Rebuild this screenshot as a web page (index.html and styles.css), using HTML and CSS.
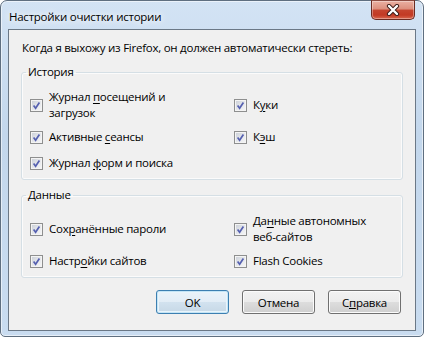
FILE: index.html
```html
<!DOCTYPE html>
<html lang="ru">
<head>
<meta charset="utf-8">
<title>Настройки очистки истории</title>
<link rel="stylesheet" href="styles.css">
</head>
<body>
<div class="window">
  <div class="titlebar">
    <span class="title">Настройки очистки истории</span>
    <span class="close"><svg width="14" height="12" viewBox="0 0 14 12"><path d="M3 2 L11 10 M11 2 L3 10" stroke="#3a1a16" stroke-width="4.2" stroke-linecap="round"/><path d="M3 2 L11 10 M11 2 L3 10" stroke="#fff" stroke-width="2.4" stroke-linecap="round"/></svg></span>
  </div>
  <div class="client">
    <p class="intro">Когда я выхожу из Firefox, он должен автоматически стереть:</p>
    <fieldset class="group history">
      <legend>История</legend>
      <div class="grid">
        <label class="check"><span class="cb"><svg viewBox="0 0 9 9"><path d="M1.6 4.6 L3.6 7.2 L7.4 1.6"/></svg></span><span>Журнал <u>п</u>осещений и<br>загрузок</span></label>
        <label class="check"><span class="cb"><svg viewBox="0 0 9 9"><path d="M1.6 4.6 L3.6 7.2 L7.4 1.6"/></svg></span><span>К<u>у</u>ки</span></label>
        <label class="check"><span class="cb"><svg viewBox="0 0 9 9"><path d="M1.6 4.6 L3.6 7.2 L7.4 1.6"/></svg></span><span>Активные <u>с</u>еансы</span></label>
        <label class="check"><span class="cb"><svg viewBox="0 0 9 9"><path d="M1.6 4.6 L3.6 7.2 L7.4 1.6"/></svg></span><span>К<u>э</u>ш</span></label>
        <label class="check"><span class="cb"><svg viewBox="0 0 9 9"><path d="M1.6 4.6 L3.6 7.2 L7.4 1.6"/></svg></span><span>Журнал <u>ф</u>орм и поиска</span></label>
      </div>
    </fieldset>
    <fieldset class="group data">
      <legend>Данные</legend>
      <div class="grid grid-data">
        <label class="check"><span class="cb"><svg viewBox="0 0 9 9"><path d="M1.6 4.6 L3.6 7.2 L7.4 1.6"/></svg></span><span>Сох<u>р</u>анённые пароли</span></label>
        <label class="check"><span class="cb"><svg viewBox="0 0 9 9"><path d="M1.6 4.6 L3.6 7.2 L7.4 1.6"/></svg></span><span>Да<u>н</u>ные автономных<br>веб-сайтов</span></label>
        <label class="check"><span class="cb"><svg viewBox="0 0 9 9"><path d="M1.6 4.6 L3.6 7.2 L7.4 1.6"/></svg></span><span>Настр<u>о</u>йки сайтов</span></label>
        <label class="check"><span class="cb"><svg viewBox="0 0 9 9"><path d="M1.6 4.6 L3.6 7.2 L7.4 1.6"/></svg></span><span>Flash Cookies</span></label>
      </div>
    </fieldset>
    <div class="buttons">
      <button class="btn default">OK</button>
      <button class="btn">Отмена</button>
      <button class="btn">С<u>п</u>равка</button>
    </div>
  </div>
</div>
</body>
</html>
```
FILE: styles.css
```css
* { box-sizing: border-box; }
html, body { margin: 0; padding: 0; background: #ffffff; }
body {
  font-family: "Open Sans", "Noto Sans", "DejaVu Sans", sans-serif;
  font-size: 11.5px;
  line-height: 16px;
  letter-spacing: -0.25px;
  color: #000;
}
.window {
  width: 424px;
  height: 337px;
  border: 1px solid #5f6f80;
  border-radius: 7px 7px 5px 5px;
  background: linear-gradient(to bottom, #d3e3f4 0%, #c3d7ec 40%, #c9dcf0 100%);
  box-shadow: inset 0 0 0 1px rgba(255,255,255,0.55);
  padding: 0 7px 5px 7px;
  display: flex;
  flex-direction: column;
}
.titlebar {
  height: 28px;
  display: flex;
  justify-content: space-between;
  align-items: flex-start;
  flex: none;
}
.title {
  padding: 8px 0 0 1px;
  text-shadow: 0 0 6px #fff, 0 0 10px #fff;
}
.close {
  margin-top: -1px;
  margin-right: 1px;
  width: 44px;
  height: 20px;
  border: 1px solid #6a2b22;
  border-top-color: #8a4a40;
  border-radius: 0 0 5px 5px;
  background: linear-gradient(to bottom, #eab0a2 0%, #dc8e7c 45%, #c5452f 50%, #c23a24 78%, #d9684f 100%);
  box-shadow: inset 0 0 0 1px rgba(255,255,255,0.35);
  display: flex;
  align-items: center;
  justify-content: center;
}
.client {
  flex: 1;
  border: 1px solid #6b7886;
  background: #f0f0f0;
  padding: 10px 12px 0 12px;
  display: flex;
  flex-direction: column;
}
.intro {
  margin: 0 0 8px 1px;
}
.group {
  margin: 0;
  border: 1px solid #d5dfe5;
  border-radius: 3px;
  box-shadow: inset 0 0 0 1px #fbfbfb;
  padding: 6px 8px 3px 8px;
}
.group legend {
  padding: 0 2px;
  margin-left: -4px;
}
.data {
  margin-top: 7px;
  padding-top: 7px;
}
.grid {
  display: grid;
  grid-template-columns: 204px 1fr;
  grid-template-rows: 38px 26px 26px;
  align-items: center;
}
.grid-data { grid-template-rows: 38px 26px; }
.check {
  display: flex;
  align-items: center;
  gap: 6px;
}
.check u { text-underline-offset: 2px; }
.cb {
  flex: none;
  width: 13px;
  height: 13px;
  border: 1px solid #8e8f8f;
  background: linear-gradient(135deg, #c9ced6 0%, #e6e8ec 55%, #f7f7f7 100%);
  box-shadow: inset 0 0 0 1px #f4f4f4;
  display: flex;
  align-items: center;
  justify-content: center;
}
.cb svg {
  width: 9px;
  height: 9px;
  display: block;
}
.cb path {
  fill: none;
  stroke: #5560b0;
  stroke-width: 1.7;
}
.buttons {
  display: flex;
  justify-content: flex-end;
  gap: 13px;
  margin-top: 12px;
  padding-right: 2px;
}
.btn {
  width: 73px;
  height: 24px;
  border: 1px solid #707070;
  border-radius: 3px;
  background: linear-gradient(to bottom, #f2f2f2 0%, #ebebeb 50%, #dddddd 51%, #cfcfcf 100%);
  box-shadow: inset 0 0 0 1px #fbfbfb;
  font-family: inherit;
  font-size: 11.5px;
  letter-spacing: -0.25px;
  color: #000;
  padding: 0;
}
.btn.default {
  border-color: #3c7fb1;
  background: linear-gradient(to bottom, #eaf3fa 0%, #e2edf6 50%, #d2e2ef 51%, #c6d8e6 100%);
  box-shadow: inset 0 0 0 1px #c4e5f6, inset 0 0 0 2px #e9f4fb;
}
```
